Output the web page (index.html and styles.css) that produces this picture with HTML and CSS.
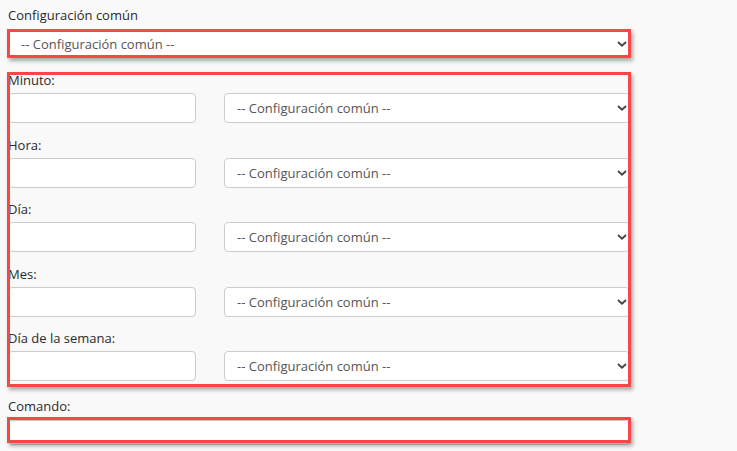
FILE: index.html
```html
<!DOCTYPE html>
<html lang="es">
<head>
<meta charset="utf-8">
<title>Cron</title>
<link rel="stylesheet" href="styles.css">
</head>
<body>
<div class="page">
  <form class="cron-form">
    <label class="lbl lbl-top">Configuración común</label>
    <div class="sel-wrap full">
      <select class="ctrl sel"><option>-- Configuración común --</option></select>
      <svg class="chev" viewBox="0 0 10 6" width="10" height="6"><path d="M1 1 L5 4.6 L9 1" fill="none" stroke="#444" stroke-width="1.9"/></svg>
    </div>

    <div class="fields">
      <div class="field">
        <label class="lbl">Minuto:</label>
        <div class="pair">
          <input class="ctrl inp" type="text">
          <div class="sel-wrap">
            <select class="ctrl sel"><option>-- Configuración común --</option></select>
            <svg class="chev" viewBox="0 0 10 6" width="10" height="6"><path d="M1 1 L5 4.6 L9 1" fill="none" stroke="#444" stroke-width="1.9"/></svg>
          </div>
        </div>
      </div>
      <div class="field">
        <label class="lbl">Hora:</label>
        <div class="pair">
          <input class="ctrl inp" type="text">
          <div class="sel-wrap">
            <select class="ctrl sel"><option>-- Configuración común --</option></select>
            <svg class="chev" viewBox="0 0 10 6" width="10" height="6"><path d="M1 1 L5 4.6 L9 1" fill="none" stroke="#444" stroke-width="1.9"/></svg>
          </div>
        </div>
      </div>
      <div class="field">
        <label class="lbl">Día:</label>
        <div class="pair">
          <input class="ctrl inp" type="text">
          <div class="sel-wrap">
            <select class="ctrl sel"><option>-- Configuración común --</option></select>
            <svg class="chev" viewBox="0 0 10 6" width="10" height="6"><path d="M1 1 L5 4.6 L9 1" fill="none" stroke="#444" stroke-width="1.9"/></svg>
          </div>
        </div>
      </div>
      <div class="field">
        <label class="lbl">Mes:</label>
        <div class="pair">
          <input class="ctrl inp" type="text">
          <div class="sel-wrap">
            <select class="ctrl sel"><option>-- Configuración común --</option></select>
            <svg class="chev" viewBox="0 0 10 6" width="10" height="6"><path d="M1 1 L5 4.6 L9 1" fill="none" stroke="#444" stroke-width="1.9"/></svg>
          </div>
        </div>
      </div>
      <div class="field">
        <label class="lbl">Día de la semana:</label>
        <div class="pair">
          <input class="ctrl inp" type="text">
          <div class="sel-wrap">
            <select class="ctrl sel"><option>-- Configuración común --</option></select>
            <svg class="chev" viewBox="0 0 10 6" width="10" height="6"><path d="M1 1 L5 4.6 L9 1" fill="none" stroke="#444" stroke-width="1.9"/></svg>
          </div>
        </div>
      </div>
    </div>

    <label class="lbl lbl-cmd">Comando:</label>
    <input class="ctrl inp cmd" type="text">
  </form>

  <div class="mark mark-1"></div>
  <div class="mark mark-2"></div>
  <div class="mark mark-3"></div>
</div>
</body>
</html>
```
FILE: styles.css
```css
html, body {
  margin: 0;
  padding: 0;
  background: #f9f9f9;
}
body {
  font-family: "Open Sans", "Liberation Sans", sans-serif;
  font-size: 13px;
  color: #2a2a2a;
}
.page {
  position: relative;
  width: 737px;
  height: 451px;
  overflow: hidden;
}
.cron-form {
  width: 622px;
  padding: 6px 0 0 8px;
  display: flex;
  flex-direction: column;
}
.lbl {
  display: block;
  line-height: 18px;
  height: 18px;
}
.lbl-top {
  margin-bottom: 5px;
}
.ctrl {
  box-sizing: border-box;
  font-family: inherit;
  font-size: 13px;
  border: 1px solid #ccc;
  border-radius: 4px;
  background: #fff;
  height: 30px;
  margin: 0;
  outline: none;
}
.sel {
  -webkit-appearance: none;
  appearance: none;
  width: 100%;
  padding: 0 24px 0 12px;
  color: #555;
}
.inp {
  padding: 0 10px;
}
.sel-wrap {
  position: relative;
}
.sel-wrap.full .sel {
  height: 29px;
}
.chev {
  position: absolute;
  right: 3px;
  top: 12px;
  pointer-events: none;
}
.fields {
  display: flex;
  flex-direction: column;
  margin-top: 13px;
}
.field {
  display: flex;
  flex-direction: column;
  margin-bottom: 12.5px;
}
.field .lbl {
  margin-bottom: 4px;
}
.pair {
  display: grid;
  grid-template-columns: 188px 1fr;
  column-gap: 28px;
}
.lbl-cmd {
  margin-top: 3px;
  margin-bottom: 5px;
}
.cmd {
  width: 100%;
  height: 25px;
}
.mark {
  position: absolute;
  box-sizing: border-box;
  border: 3px solid #f94646;
  box-shadow: 2px 3px 4px rgba(0, 0, 0, 0.32);
  pointer-events: none;
}
.mark-1 {
  left: 7px;
  top: 29px;
  width: 624px;
  height: 29px;
}
.mark-2 {
  left: 7px;
  top: 72px;
  width: 624px;
  height: 315px;
}
.mark-3 {
  left: 7px;
  top: 417px;
  width: 624px;
  height: 26px;
}
```
